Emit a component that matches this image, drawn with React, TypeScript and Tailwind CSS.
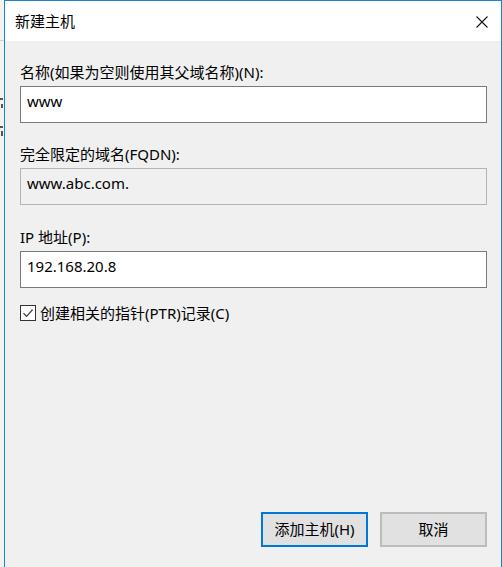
import React from "react";

const font = { fontFamily: '"Noto Sans", "Noto Sans CJK SC", sans-serif' };

function Field({
  label,
  value,
  readOnly,
  className,
}: {
  label: string;
  value: string;
  readOnly?: boolean;
  className?: string;
}) {
  return (
    <div className={className}>
      <div className="h-[20px] leading-[20px] text-[15px] text-black">{label}</div>
      <div
        className={
          "mt-[4px] h-[37px] pl-[6px] pt-[4px] leading-[20px] text-[15px] text-black border " +
          (readOnly ? "bg-[#f0f0f0] border-[#b4b4b4]" : "bg-white border-[#7a7a7a]")
        }
      >
        {value}
      </div>
    </div>
  );
}

export default function App() {
  return (
    <div className="w-[502px] h-[567px] flex overflow-hidden bg-[#f0f0f0]" style={font}>
      {/* edge of the window behind the dialog */}
      <div className="w-[4px] relative bg-[#f3f3f3]">
        <div className="absolute top-[40px] left-0 w-[4px] h-px bg-[#d0d0d0]" />
        <div className="absolute top-[98px] left-0 w-[3px] h-[2px] bg-[#555]" />
        <div className="absolute top-[104px] left-[1px] w-[2px] h-[4px] bg-[#555]" />
        <div className="absolute top-[126px] left-0 w-[3px] h-[2px] bg-[#555]" />
        <div className="absolute top-[131px] left-[1px] w-[2px] h-[5px] bg-[#555]" />
      </div>

      <div className="flex-1 flex flex-col border-t border-l border-r border-[#1883d7]">
        <div className="h-[40px] bg-white flex items-center justify-between pl-[10px] pr-[13px]">
          <span className="text-[15px] leading-[20px] text-black">新建主机</span>
          <svg width="12" height="12" viewBox="0 0 12 12" className="mt-[1px]">
            <path d="M0.5 0.5 L11.5 11.5 M11.5 0.5 L0.5 11.5" stroke="#111" strokeWidth="1.1" />
          </svg>
        </div>

        <div className="flex-1 flex flex-col bg-[#f0f0f0] pl-[15px] pr-[14px] pt-[21px] pb-[20px]">
          <Field label="名称(如果为空则使用其父域名称)(N):" value="www" />
          <Field className="mt-[21px]" label="完全限定的域名(FQDN):" value="www.abc.com." readOnly />
          <Field className="mt-[22px]" label="IP 地址(P):" value="192.168.20.8" />

          <label className="mt-[15px] flex items-center gap-[4px]">
            <span className="w-[16px] h-[16px] border border-[#333] bg-white flex items-center justify-center">
              <svg width="12" height="12" viewBox="0 0 12 12">
                <path d="M1.5 6.2 L4.6 9.3 L10.6 2.6" fill="none" stroke="#333" strokeWidth="1.2" />
              </svg>
            </span>
            <span className="text-[15px] leading-[20px] text-black">创建相关的指针(PTR)记录(C)</span>
          </label>

          <div className="mt-auto flex justify-end gap-[12px]">
            <button className="w-[107px] h-[35px] bg-[#e1e1e1] border-2 border-[#0078d7] text-[15px] text-black">
              添加主机(H)
            </button>
            <button className="w-[107px] h-[35px] bg-[#e1e1e1] border-2 border-[#bcbcbc] text-[15px] text-black">
              取消
            </button>
          </div>
        </div>
      </div>
    </div>
  );
}
